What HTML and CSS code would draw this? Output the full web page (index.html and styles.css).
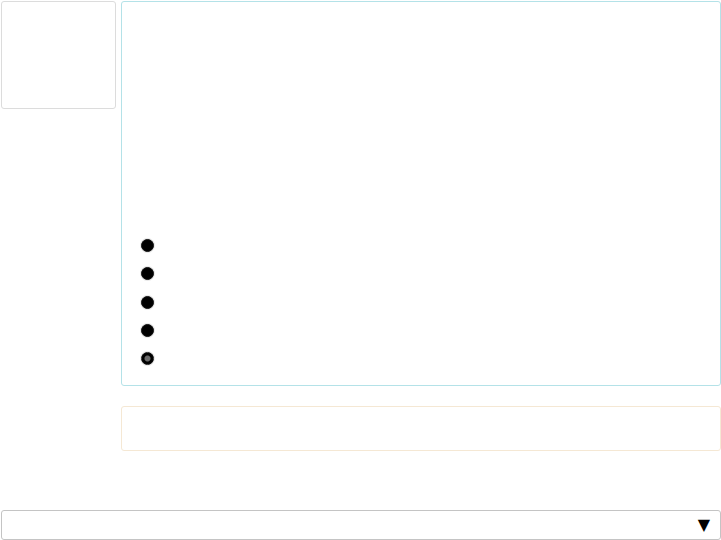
FILE: index.html
```html
<!DOCTYPE html>
<html lang="en">

<head>
    <meta charset="UTF-8">
    <title>Panel</title>
    <link rel="stylesheet" href="styles.css">
</head>

<body>
    <div class="layout">
        <div class="side"></div>

        <div class="content">
            <div class="panel">
                <ul class="dots">
                    <li><span class="dot"></span></li>
                    <li><span class="dot"></span></li>
                    <li><span class="dot"></span></li>
                    <li><span class="dot"></span></li>
                    <li><span class="dot dot-active"></span></li>
                </ul>
            </div>
            <div class="note"></div>
        </div>
    </div>

    <div class="select">
        <span class="arrow">▼</span>
    </div>
</body>

</html>
```

FILE: styles.css
```css
* {
    margin: 0;
    padding: 0;
    box-sizing: border-box;
}

body {
    background: #fff;
    font-family: 'DejaVu Sans', sans-serif;
    padding: 1px 0 0 1px;
    color: #000;
}

.layout {
    display: flex;
    gap: 5px;
}

.side {
    width: 115px;
    height: 108px;
    border: 1px solid #dcdcdc;
    border-radius: 3px;
    flex-shrink: 0;
}

.content {
    flex: 1;
    display: flex;
    flex-direction: column;
    gap: 20px;
}

.panel {
    height: 385px;
    border: 1px solid #b4e2e8;
    border-radius: 3px;
    display: flex;
    flex-direction: column;
    justify-content: flex-end;
    padding: 0 0 12px 19px;
}

.dots {
    list-style: none;
}

.dots li {
    height: 28.4px;
    display: flex;
    align-items: center;
}

.dot {
    width: 13px;
    height: 13px;
    border-radius: 50%;
    background: #000;
    border: 1px solid #111;
    box-shadow: 0 0 0 1px #e8e8e8;
}

.dot-active {
    background: radial-gradient(circle, #6a6a6a 0 2.5px, #000 3.5px);
}

.note {
    height: 45px;
    border: 1px solid #f5e8d4;
    border-radius: 3px;
}

.select {
    margin-top: 59px;
    height: 30px;
    border: 1px solid #c4c4c4;
    border-radius: 3px;
    display: flex;
    justify-content: flex-end;
    align-items: center;
    padding-right: 10px;
}

.arrow {
    font-size: 16px;
    line-height: 1;
}
```
